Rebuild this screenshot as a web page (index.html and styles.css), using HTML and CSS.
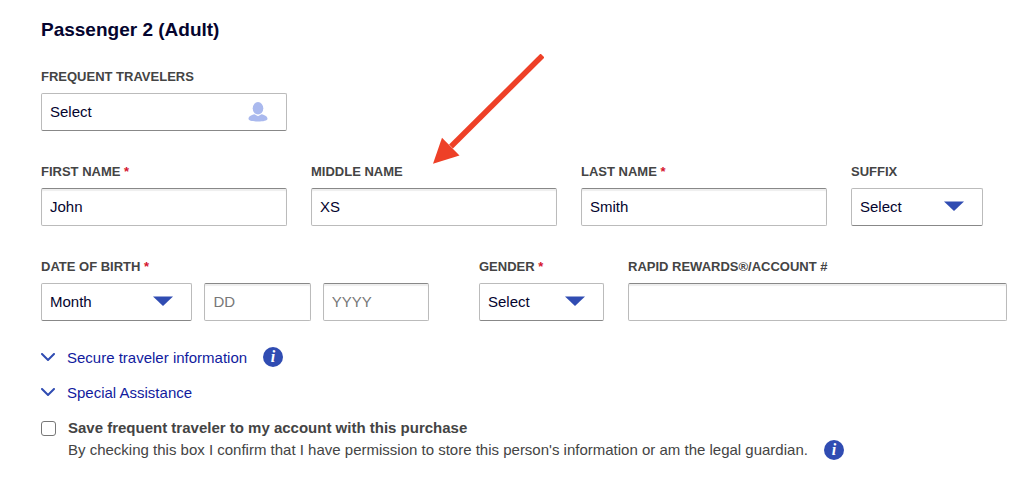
FILE: index.html
```
<!doctype html>
<html lang="en">
<head>
	<meta charset="utf-8">
	<title>Passenger information</title>
	<link rel="stylesheet" href="styles.css">
</head>

<body>
	<form class="passenger">
		<h2>Passenger 2 (Adult)</h2>

		<div class="row names">
			<div class="field">
				<label for="frequent">FREQUENT TRAVELERS</label>
				<div class="dropdown">
					<select id="frequent"><option>Select</option></select>
					<svg class="person" viewBox="0 0 20 20" aria-hidden="true">
						<ellipse cx="10" cy="6.3" rx="5.300" ry="6.200"/>
						<path d="M.5 16.800c0-2.400 2.500-3.600 6-4.500l3.500 2 3.500-2c3.500.9 6 2.100 6 4.500 0 2-4.200 2.700-9.500 2.700S.5 18.800.5 16.800z"/>
					</svg>
				</div>
			</div>
		</div>

		<div class="row names">
			<div class="field">
				<label for="first">FIRST NAME <span class="required">*</span></label>
				<input type="text" id="first" value="John">
			</div>
			<div class="field">
				<label for="middle">MIDDLE NAME</label>
				<input type="text" id="middle" value="XS">
				<!-- arrow lies over the form, pointing at this field -->
				<svg class="arrow" viewBox="0 0 112 110" aria-hidden="true">
					<path d="M19 92.500L110.500 1.500" stroke="#ee4027" stroke-width="5.500"/>
					<path d="M1 109.700L10 83.700L27.500 101.500z" fill="#ee4027"/>
				</svg>
			</div>
			<div class="field">
				<label for="last">LAST NAME <span class="required">*</span></label>
				<input type="text" id="last" value="Smith">
			</div>
			<div class="field suffix">
				<label for="suffix">SUFFIX</label>
				<div class="dropdown">
					<select id="suffix"><option>Select</option></select>
					<svg class="caret" viewBox="0 0 20 10" aria-hidden="true"><path d="M0 .5h20L10 10z"/></svg>
				</div>
			</div>
		</div>

		<div class="row details">
			<div class="field">
				<label for="month">DATE OF BIRTH <span class="required">*</span></label>
				<div class="birth">
					<div class="dropdown">
						<select id="month"><option>Month</option></select>
						<svg class="caret" viewBox="0 0 20 10" aria-hidden="true"><path d="M0 .5h20L10 10z"/></svg>
					</div>
					<input type="text" placeholder="DD" aria-label="Day of birth">
					<input type="text" placeholder="YYYY" aria-label="Year of birth">
				</div>
			</div>
			<div class="field">
				<label for="gender">GENDER <span class="required">*</span></label>
				<div class="dropdown">
					<select id="gender"><option>Select</option></select>
					<svg class="caret" viewBox="0 0 20 10" aria-hidden="true"><path d="M0 .5h20L10 10z"/></svg>
				</div>
			</div>
			<div class="field">
				<label for="rewards">RAPID REWARDS®/ACCOUNT #</label>
				<input type="text" id="rewards">
			</div>
		</div>

		<div class="links">
			<div class="linkRow">
				<a href="#secure">
					<svg class="chevron" viewBox="0 0 14 8" aria-hidden="true"><path d="M1 1l6 6 6-6"/></svg>
					Secure traveler information
				</a>
				<button type="button" class="info">i</button>
			</div>
			<div class="linkRow">
				<a href="#assistance">
					<svg class="chevron" viewBox="0 0 14 8" aria-hidden="true"><path d="M1 1l6 6 6-6"/></svg>
					Special Assistance
				</a>
			</div>
		</div>

		<div class="save">
			<input type="checkbox" id="save">
			<div>
				<label for="save">Save frequent traveler to my account with this purchase</label>
				<div class="confirm">
					<span>By checking this box I confirm that I have permission to store this person's information or am the legal guardian.</span>
					<button type="button" class="info">i</button>
				</div>
			</div>
		</div>
	</form>
</body>
</html>
```
FILE: styles.css
```
* {
	margin: 0;
	padding: 0;
	box-sizing: border-box;
}

body {
	background-color: white;
	color: #444;
	font-family: "Liberation Sans", Arial, sans-serif;
	font-size: 15px;
}

.passenger {
	padding: 18px 17px 16px 41px;
}

h2 {
	margin-bottom: 27px;
	color: #04042e;
	font-size: 19px;
	line-height: 24px;
}

.row {
	display: grid;
	column-gap: 24px;
	margin-bottom: 33px;
}
.names {
	grid-template-columns: 246fr 246fr 246fr 156fr;
}
.details {
	grid-template-columns: 414fr 125fr 379fr;
	margin-bottom: 24px;
}

.field {
	position: relative;
	min-width: 0;
}
.field label {
	display: block;
	margin-bottom: 8px;
	font-size: 13px;
	font-weight: bold;
	line-height: 16px;
	white-space: nowrap;
}
.required {
	color: #d5152e;
}
.suffix {
	padding-right: 24px;
}
.birth {
	display: grid;
	grid-template-columns: 151fr 106fr 106fr;
	gap: 12px;
	padding-right: 26px;
}

input[type=text],
select {
	display: block;
	width: 100%;
	height: 38px;
	padding: 0 8px 1px;
	border: 1px solid #bbb;
	border-radius: 2px;
	background-color: white;
	color: #04042e;
	font-family: inherit;
	font-size: 15px;
}
input[type=text] {
	border-top-color: #888;
	box-shadow: inset 0 2px 1px #eee;
}
input::placeholder {
	color: #777;
}
select {
	-webkit-appearance: none;
	appearance: none;
	border-bottom-color: #888;
}

.dropdown {
	position: relative;
}
.dropdown svg {
	position: absolute;
	right: 19px;
	pointer-events: none;
}
.caret {
	top: 13px;
	width: 20px;
	height: 10px;
	fill: #304cb2;
}
.dropdown .person {
	top: 9px;
	width: 20px;
	height: 20px;
	fill: #aab9ee;
}

.arrow {
	position: absolute;
	left: 49%;
	bottom: 100%;
	width: 112px;
	height: 110px;
	pointer-events: none;
}

.linkRow {
	display: flex;
	align-items: center;
	gap: 16px;
	height: 24px;
	margin-bottom: 11px;
}
.linkRow a {
	display: flex;
	align-items: center;
	gap: 12px;
	color: #111b9e;
	text-decoration: none;
}
.chevron {
	width: 14px;
	height: 8px;
	fill: none;
	stroke: #304cb2;
	stroke-width: 2;
	stroke-linecap: round;
}

.info {
	flex: none;
	width: 20px;
	height: 20px;
	border: none;
	border-radius: 50%;
	background-color: #304cb2;
	color: white;
	font-family: "Liberation Serif", serif;
	font-size: 16px;
	font-style: italic;
	font-weight: bold;
	line-height: 20px;
	cursor: pointer;
}

.save {
	display: flex;
	gap: 12px;
	margin-top: 12px;
}
.save input {
	flex: none;
	width: 15px;
	height: 15px;
	margin-top: 5px;
	border: 1px solid #777;
	border-radius: 3px;
	-webkit-appearance: none;
	appearance: none;
}
.save input:checked {
	background-color: #304cb2;
}
.save label {
	display: block;
	font-weight: bold;
	line-height: 23px;
}
.confirm {
	display: flex;
	align-items: center;
	gap: 16px;
	line-height: 22px;
}
```
